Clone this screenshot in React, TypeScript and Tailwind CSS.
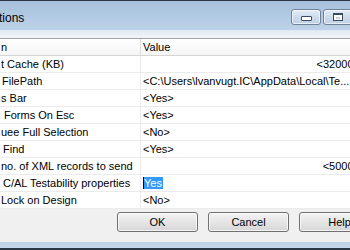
import React from 'react';

const rows: { label: string; indent: string; value: string; align?: 'right'; selected?: boolean }[] = [
  { label: 't Cache (KB)', indent: 'pl-[1px]', value: '<32000>', align: 'right' },
  { label: 'FilePath', indent: 'pl-[2px]', value: '<C:\\Users\\lvanvugt.IC\\AppData\\Local\\Te...' },
  { label: 's Bar', indent: 'pl-[1px]', value: '<Yes>' },
  { label: 'Forms On Esc', indent: 'pl-[4px]', value: '<Yes>' },
  { label: 'uee Full Selection', indent: 'pl-[1px]', value: '<No>' },
  { label: 'Find', indent: 'pl-[3px]', value: '<Yes>' },
  { label: 'no. of XML records to send', indent: 'pl-[1px]', value: '<5000>', align: 'right' },
  { label: 'C/AL Testability properties', indent: 'pl-[3px]', value: 'Yes', selected: true },
  { label: 'Lock on Design', indent: 'pl-[1px]', value: '<No>' },
];

const CaptionButton = ({ kind }: { kind: 'min' | 'max' }) => (
  <div className="w-[30px] h-[16px] rounded-[3px] border border-[#6f8299] bg-gradient-to-b from-[#e3ecf5] via-[#cddcec] to-[#bfd1e5] flex items-center justify-center shadow-[inset_0_0_0_1px_rgba(255,255,255,0.6)]">
    {kind === 'min' ? (
      <div className="w-[11px] h-[5px] rounded-[1px] border border-[#3b4a5c] bg-white mt-[3px]" />
    ) : (
      <div className="w-[10px] h-[8px] border border-[#3b4a5c] border-t-2 bg-white flex items-center justify-center">
        <div className="w-[4px] h-[2px] bg-[#c7d3df]" />
      </div>
    )}
  </div>
);

const DialogButton = ({ label }: { label: string }) => (
  <div className="w-[81px] h-[20px] shrink-0 rounded-[3px] border border-[#707070] bg-gradient-to-b from-[#f2f2f2] via-[#e6e6e6] to-[#d6d6d6] flex items-center justify-center text-[11px] text-black shadow-[inset_0_0_0_1px_rgba(255,255,255,0.7)]">
    {label}
  </div>
);

export default function App() {
  return (
    <div className="w-[350px] h-[250px] overflow-hidden flex flex-col bg-[#f0f0f0] font-['Liberation_Sans',Arial,sans-serif] text-[11px] text-black">
      {/* title bar */}
      <div className="h-[30px] shrink-0 border-t border-[#2a3846] bg-gradient-to-b from-[#a6c1dc] to-[#bcd2e9] flex items-center pr-0">
        <span className="text-[12px] pt-[5px] pl-0 -ml-[1px]">tions</span>
        <div className="ml-auto flex gap-[2px] pt-[3px] -mr-[3px]">
          <CaptionButton kind="min" />
          <CaptionButton kind="max" />
        </div>
      </div>
      <div className="h-[8px] shrink-0 bg-gradient-to-b from-[#dfe8f2] to-[#f3f5f8]" />

      {/* property list */}
      <div className="shrink-0 bg-white border-t border-[#a0a0a0] w-[362px]">
        <div className="h-[17px] flex border-b border-[#d5d5d5] bg-gradient-to-b from-white to-[#f5f5f5]">
          <div className="w-[141px] border-r border-[#dcdcdc] pl-[1px] leading-[16px]">n</div>
          <div className="pl-[2px] leading-[16px]">Value</div>
        </div>
        {rows.map((r) => (
          <div key={r.label} className="h-[17px] flex border-b border-[#ebebeb]">
            <div className={`w-[141px] shrink-0 border-r border-[#ebebeb] leading-[16px] whitespace-nowrap ${r.indent}`}>
              {r.label}
            </div>
            <div className={`flex-1 leading-[16px] whitespace-nowrap overflow-hidden px-[2px] flex items-center ${r.align === 'right' ? 'justify-end' : ''}`}>
              {r.selected ? (
                <span className="flex items-center">
                  <span className="w-[1px] h-[12px] bg-black" />
                  <span className="bg-[#3399ff] text-white leading-[12px] h-[12px] pr-[1px]">{r.value}</span>
                </span>
              ) : (
                r.value
              )}
            </div>
          </div>
        ))}
      </div>

      {/* buttons */}
      <div className="flex-1 flex items-start pt-[3px] pl-[117px] gap-[10px]">
        <DialogButton label="OK" />
        <DialogButton label="Cancel" />
        <DialogButton label="Help" />
      </div>

      {/* bottom frame */}
      <div className="h-[6px] shrink-0 bg-gradient-to-b from-[#bcd2e8] to-[#c5d9ec]" />
      <div className="h-[2px] shrink-0 bg-[#2a3846]" />
    </div>
  );
}
